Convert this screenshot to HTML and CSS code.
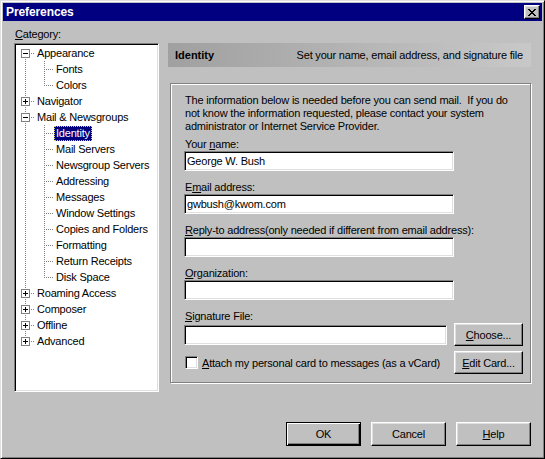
FILE: index.html
```html
<!DOCTYPE html>
<html lang="en">
<head>
<meta charset="utf-8">
<title>Preferences</title>
<link rel="stylesheet" href="styles.css">
</head>
<body>
<div class="window">
  <div class="titlebar">
    <span class="title">Preferences</span>
    <span class="close"><svg width="8" height="7" viewBox="0 0 8 7"><path d="M0 0h2v1h-2zM6 0h2v1h-2zM1 1h2v1h-2zM5 1h2v1h-2zM2 2h4v1h-4zM3 3h2v1h-2zM2 4h4v1h-4zM1 5h2v1h-2zM5 5h2v1h-2zM0 6h2v1h-2zM6 6h2v1h-2z" fill="#000"/></svg></span>
  </div>
  <div class="content">
    <div class="cat-label"><u>C</u>ategory:</div>
    <div class="tree sunken">
      <div class="row"><span class="cell c-root-first"><svg class="exp" width="9" height="9" viewBox="0 0 9 9"><rect x="0.5" y="0.5" width="8" height="8" fill="#fff" stroke="#808080"/><path d="M2 4.5h5" stroke="#000"/></svg></span><span class="label">Appearance</span></div>
      <div class="row"><span class="cell c-pass"></span><span class="cell c-child"></span><span class="label">Fonts</span></div>
      <div class="row"><span class="cell c-pass"></span><span class="cell c-child-last"></span><span class="label">Colors</span></div>
      <div class="row"><span class="cell c-root"><svg class="exp" width="9" height="9" viewBox="0 0 9 9"><rect x="0.5" y="0.5" width="8" height="8" fill="#fff" stroke="#808080"/><path d="M2 4.5h5M4.5 2v5" stroke="#000"/></svg></span><span class="label">Navigator</span></div>
      <div class="row"><span class="cell c-root"><svg class="exp" width="9" height="9" viewBox="0 0 9 9"><rect x="0.5" y="0.5" width="8" height="8" fill="#fff" stroke="#808080"/><path d="M2 4.5h5" stroke="#000"/></svg></span><span class="label">Mail &amp; Newsgroups</span></div>
      <div class="row"><span class="cell c-pass"></span><span class="cell c-child"></span><span class="label selected">Identity</span></div>
      <div class="row"><span class="cell c-pass"></span><span class="cell c-child"></span><span class="label">Mail Servers</span></div>
      <div class="row"><span class="cell c-pass"></span><span class="cell c-child"></span><span class="label">Newsgroup Servers</span></div>
      <div class="row"><span class="cell c-pass"></span><span class="cell c-child"></span><span class="label">Addressing</span></div>
      <div class="row"><span class="cell c-pass"></span><span class="cell c-child"></span><span class="label">Messages</span></div>
      <div class="row"><span class="cell c-pass"></span><span class="cell c-child"></span><span class="label">Window Settings</span></div>
      <div class="row"><span class="cell c-pass"></span><span class="cell c-child"></span><span class="label">Copies and Folders</span></div>
      <div class="row"><span class="cell c-pass"></span><span class="cell c-child"></span><span class="label">Formatting</span></div>
      <div class="row"><span class="cell c-pass"></span><span class="cell c-child"></span><span class="label">Return Receipts</span></div>
      <div class="row"><span class="cell c-pass"></span><span class="cell c-child-last"></span><span class="label">Disk Space</span></div>
      <div class="row"><span class="cell c-root"><svg class="exp" width="9" height="9" viewBox="0 0 9 9"><rect x="0.5" y="0.5" width="8" height="8" fill="#fff" stroke="#808080"/><path d="M2 4.5h5M4.5 2v5" stroke="#000"/></svg></span><span class="label">Roaming Access</span></div>
      <div class="row"><span class="cell c-root"><svg class="exp" width="9" height="9" viewBox="0 0 9 9"><rect x="0.5" y="0.5" width="8" height="8" fill="#fff" stroke="#808080"/><path d="M2 4.5h5M4.5 2v5" stroke="#000"/></svg></span><span class="label">Composer</span></div>
      <div class="row"><span class="cell c-root"><svg class="exp" width="9" height="9" viewBox="0 0 9 9"><rect x="0.5" y="0.5" width="8" height="8" fill="#fff" stroke="#808080"/><path d="M2 4.5h5M4.5 2v5" stroke="#000"/></svg></span><span class="label">Offline</span></div>
      <div class="row"><span class="cell c-root-last"><svg class="exp" width="9" height="9" viewBox="0 0 9 9"><rect x="0.5" y="0.5" width="8" height="8" fill="#fff" stroke="#808080"/><path d="M2 4.5h5M4.5 2v5" stroke="#000"/></svg></span><span class="label">Advanced</span></div>
    </div>
    <div class="panel">
      <div class="panel-head"><span class="head-title">Identity</span><span class="head-desc">Set your name, email address, and signature file</span></div>
      <div class="group">
        <p class="intro">The information below is needed before you can send mail.&nbsp; If you do<br>not know the information requested, please contact your system<br>administrator or Internet Service Provider.</p>
        <div class="field">
          <label class="flabel">Your <u>n</u>ame:</label>
          <input class="text" type="text" value="George W. Bush">
        </div>
        <div class="field">
          <label class="flabel">E<u>m</u>ail address:</label>
          <input class="text" type="text" value="gwbush@kwom.com">
        </div>
        <div class="field">
          <label class="flabel"><u>R</u>eply-to address(only needed if different from email address):</label>
          <input class="text" type="text" value="">
        </div>
        <div class="field">
          <label class="flabel"><u>O</u>rganization:</label>
          <input class="text" type="text" value="">
        </div>
        <div class="field field-sig">
          <label class="flabel"><u>S</u>ignature File:</label>
          <div class="sig-row">
            <input class="text sig-input" type="text" value="">
            <button class="btn btn-side" type="button"><u>C</u>hoose...</button>
          </div>
        </div>
        <div class="check-row">
          <input class="check" type="checkbox">
          <span class="check-label"><u>A</u>ttach my personal card to messages (as a vCard)</span>
          <button class="btn btn-side btn-push" type="button"><u>E</u>dit Card...</button>
        </div>
      </div>
    </div>
  </div>
  <div class="footer">
    <button class="btn btn-foot btn-default" type="button">OK</button>
    <button class="btn btn-foot" type="button">Cancel</button>
    <button class="btn btn-foot" type="button"><u>H</u>elp</button>
  </div>
</div>
</body>
</html>
```
FILE: styles.css
```css
* { box-sizing: border-box; }
html, body { margin: 0; padding: 0; }
body {
  background: #c0c0c0;
  font-family: "Liberation Sans", Arial, sans-serif;
  font-size: 11px;
  letter-spacing: -0.2px;
  color: #000;
}
u { text-decoration: underline; text-underline-offset: 1px; }

.window {
  width: 545px;
  height: 459px;
  background: #c0c0c0;
  border: 1px solid;
  border-color: #dfdfdf #000 #000 #dfdfdf;
  box-shadow: inset 1px 1px #fff, inset -1px -1px #808080;
  padding: 2px;
}

.titlebar {
  height: 18px;
  background: #000080;
  color: #fff;
  display: flex;
  align-items: center;
  justify-content: space-between;
  padding-left: 3px;
}
.title { font-weight: bold; font-size: 12px; letter-spacing: -0.1px; }
.close {
  width: 16px;
  height: 14px;
  margin-right: 2px;
  background: #c0c0c0;
  border: 1px solid;
  border-color: #fff #000 #000 #fff;
  box-shadow: inset -1px -1px #808080, inset 1px 1px #dfdfdf;
  display: flex;
  align-items: center;
  justify-content: center;
}
.close svg { display: block; }

.content {
  display: grid;
  grid-template-columns: 145px 363px;
  grid-template-rows: 15px 349px;
  column-gap: 9px;
  padding: 7px 11px 0 11px;
}
.cat-label { grid-column: 1; grid-row: 1; line-height: 13px; padding-left: 1px; }

.sunken {
  border: 1px solid;
  border-color: #808080 #fff #fff #808080;
  box-shadow: inset 1px 1px #000, inset -1px -1px #dfdfdf;
}
.tree {
  grid-column: 1;
  grid-row: 2;
  background: #fff;
  padding: 1px;
  overflow: hidden;
}
.row { display: flex; height: 16px; }
.cell {
  --dot: #808080;
  flex: none;
  width: 19px;
  height: 16px;
  display: flex;
  align-items: center;
  padding-left: 5px;
}
.exp { display: block; }
.c-root {
  background:
    repeating-linear-gradient(to right, var(--dot) 0 1px, transparent 1px 2px) 9px 8px / 10px 1px no-repeat,
    repeating-linear-gradient(to bottom, var(--dot) 0 1px, transparent 1px 2px) 9px 0 / 1px 16px no-repeat;
}
.c-root-first {
  background:
    repeating-linear-gradient(to right, var(--dot) 0 1px, transparent 1px 2px) 9px 8px / 10px 1px no-repeat,
    repeating-linear-gradient(to bottom, var(--dot) 0 1px, transparent 1px 2px) 9px 8px / 1px 8px no-repeat;
}
.c-root-last {
  background:
    repeating-linear-gradient(to right, var(--dot) 0 1px, transparent 1px 2px) 9px 8px / 10px 1px no-repeat,
    repeating-linear-gradient(to bottom, var(--dot) 0 1px, transparent 1px 2px) 9px 0 / 1px 8px no-repeat;
}
.c-pass {
  background: repeating-linear-gradient(to bottom, var(--dot) 0 1px, transparent 1px 2px) 9px 0 / 1px 16px no-repeat;
}
.c-child {
  background:
    repeating-linear-gradient(to right, var(--dot) 0 1px, transparent 1px 2px) 9px 8px / 10px 1px no-repeat,
    repeating-linear-gradient(to bottom, var(--dot) 0 1px, transparent 1px 2px) 9px 0 / 1px 16px no-repeat;
}
.c-child-last {
  background:
    repeating-linear-gradient(to right, var(--dot) 0 1px, transparent 1px 2px) 9px 8px / 10px 1px no-repeat,
    repeating-linear-gradient(to bottom, var(--dot) 0 1px, transparent 1px 2px) 9px 0 / 1px 9px no-repeat;
}
.label {
  align-self: flex-end;
  line-height: 13px;
  padding: 0 1px;
  border: 1px solid transparent;
  white-space: nowrap;
}
.label.selected {
  background: #000080;
  color: #fff;
  border: 1px dotted #d8d860;
}

.panel { grid-column: 2; grid-row: 2; }
.panel-head {
  height: 24px;
  display: flex;
  align-items: center;
  justify-content: space-between;
  padding: 0 8px 0 7px;
  background: linear-gradient(to right, #a0a0a0, #c8c8c8);
}
.head-title { font-weight: bold; letter-spacing: 0; }

.group {
  margin: 16px 0 0 2px;
  width: 361px;
  height: 300px;
  border: 1px solid #808080;
  box-shadow: inset 1px 1px #fff, 1px 1px #fff;
  padding: 10px 7px 0 13px;
}
.intro {
  margin: 0 0 5px;
  line-height: 13px;
  white-space: nowrap;
  padding-left: 1px;
}
.field { margin-bottom: 10px; }
.field-sig { margin-bottom: 5px; }
.flabel {
  display: block;
  line-height: 13px;
  padding-left: 1px;
  white-space: nowrap;
}
.text {
  display: block;
  width: 270px;
  height: 20px;
  margin: 0;
  padding: 0 2px;
  font-family: "Liberation Sans", Arial, sans-serif;
  font-size: 11px;
  letter-spacing: -0.2px;
  color: #000;
  background: #fff;
  outline: none;
  border: 1px solid;
  border-color: #808080 #fff #fff #808080;
  box-shadow: inset 1px 1px #000, inset -1px -1px #dfdfdf;
}
.sig-row { display: flex; align-items: center; gap: 7px; }
.sig-input { width: 263px; }

.btn {
  height: 23px;
  margin: 0;
  padding: 0;
  background: #c0c0c0;
  color: #000;
  font-family: "Liberation Sans", Arial, sans-serif;
  font-size: 11px;
  letter-spacing: -0.2px;
  border: 1px solid;
  border-color: #fff #000 #000 #fff;
  box-shadow: inset -1px -1px #808080, inset 1px 1px #dfdfdf;
}
.btn-side { width: 69px; flex: none; }
.btn-push { margin-left: auto; }

.check-row { display: flex; align-items: center; }
.check {
  appearance: none;
  -webkit-appearance: none;
  width: 13px;
  height: 13px;
  margin: 0 0 0 1px;
  background: #fff;
  border: 1px solid;
  border-color: #808080 #fff #fff #808080;
  box-shadow: inset 1px 1px #000, inset -1px -1px #dfdfdf;
  flex: none;
}
.check-label { margin-left: 4px; white-space: nowrap; }

.footer {
  display: flex;
  justify-content: flex-end;
  gap: 10px;
  margin-top: 30px;
  padding-right: 11px;
}
.btn-foot { width: 75px; height: 24px; }
.btn-default {
  border: 1px solid #000;
  box-shadow: inset 1px 1px #fff, inset -1px -1px #000, inset -2px -2px #808080;
}
```
